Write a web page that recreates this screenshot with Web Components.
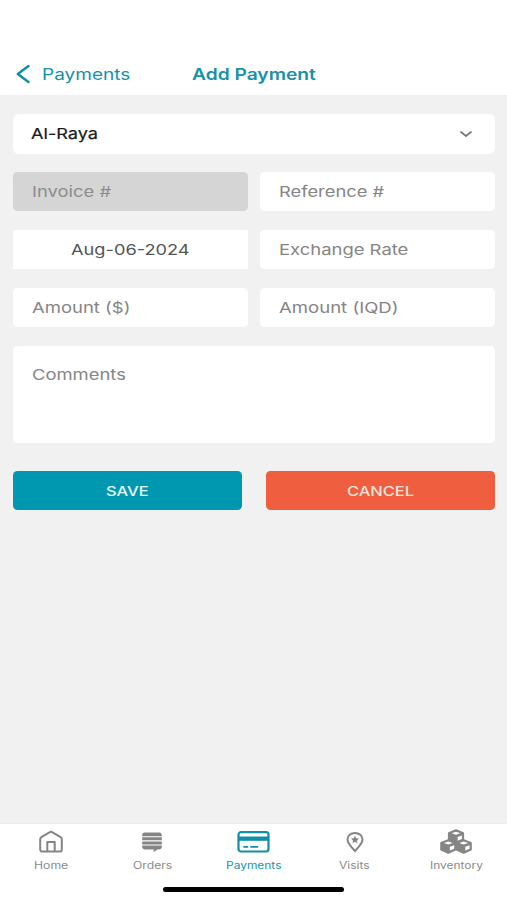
<!DOCTYPE html>
<html lang="en">
<head>
<meta charset="utf-8">
<title>Add Payment</title>
<style>
html, body { margin: 0; height: 100%; }
body { font-family: Inter, "Liberation Sans", sans-serif; background: #f1f1f1; overflow: hidden; }
</style>
</head>
<body>
<payment-app></payment-app>
<script>
const define = (name, html, setup) => {
  const template = document.createElement('template');
  template.innerHTML = html;
  customElements.define(name, class extends HTMLElement {
    connectedCallback() {
      if (this.shadowRoot) return;
      this.attachShadow({ mode: 'open' }).append(template.content.cloneNode(true));
      if (setup) setup(this, this.shadowRoot);
    }
  });
};

/* Wide-set label: text is stretched to the advance width given by "w". */
define('wide-text', `
<style>
:host { display: inline-block; white-space: nowrap; line-height: 20px; height: 20px; flex: none; }
span { display: inline-block; transform-origin: 0 50%; }
</style><span><slot></slot></span>`, (el, root) => {
  const w = +el.getAttribute('w');
  const span = root.querySelector('span');
  el.style.width = w + 'px';
  span.style.transform = 'scaleX(' + w / span.offsetWidth + ')';
});

define('nav-header', `
<style>
:host { display: flex; height: 95px; box-sizing: border-box; padding: 64px 0 0 16px; background: #fff; color: #1692a9; font-size: 16px; }
svg { display: block; width: 15px; height: 20px; margin-right: 10.500px; }
.title { font-weight: 600; margin-left: 62.500px; }
</style>
<svg viewBox="0 0 15 20" fill="none" stroke="#118fa8" stroke-width="2.500" stroke-linecap="round" stroke-linejoin="round"><path d="M12.500 2 1.800 10l10.700 8"/></svg>
<wide-text w="88"><slot name="back"></slot></wide-text>
<wide-text class="title" w="123.5"><slot name="title"></slot></wide-text>`);

define('form-field', `
<style>
:host { display: flex; align-items: center; box-sizing: border-box; height: 39px; padding: 1px 19px 0 19px; background: #fff; border-radius: 4.500px; color: #858585; font-size: 15px; }
:host([disabled]) { background: #d5d5d5; color: #8c8c8c; }
:host([date]) { justify-content: center; border-radius: 1px; color: #555; padding: 1px 0 0; }
:host([select]) { justify-content: space-between; border-radius: 6px; color: #1c1c1c; padding: 0 22px 0 18px; height: 40px; -webkit-text-stroke: .2px; }
:host([multiline]) { height: 97px; align-items: flex-start; padding-top: 19px; }
</style><slot></slot>`);

define('action-button', `
<style>
:host { display: flex; align-items: center; justify-content: center; height: 39px; border-radius: 4.500px; background: #0098b1; color: #e9fbfd; font-size: 13px; font-weight: 500; }
:host([danger]) { background: #ee5e3f; color: #ffe5dc; }
</style><slot></slot>`);

define('payment-form', `
<style>
:host { display: grid; grid-template-columns: 235.500px 235.500px; justify-content: space-between; row-gap: 19px; padding: 18.500px 12px 0 12.500px; }
.full { grid-column: 1 / -1; }
.first { margin-bottom: -.500px; }
.actions { display: grid; grid-template-columns: 229.500px 229.500px; justify-content: space-between; margin-top: 9px; }
svg { width: 14px; height: 10px; }
</style>
<form-field select class="full first"><wide-text w="66.5">Al-Raya</wide-text>
<svg viewBox="0 0 14 10" fill="none" stroke="#777" stroke-width="1.700" stroke-linecap="round" stroke-linejoin="round"><path d="m2 3 5 4 5-4"/></svg></form-field>
<form-field disabled><wide-text w="78.5">Invoice #</wide-text></form-field>
<form-field><wide-text w="105">Reference #</wide-text></form-field>
<form-field date><wide-text w="119">Aug-06-2024</wide-text></form-field>
<form-field><wide-text w="129">Exchange Rate</wide-text></form-field>
<form-field><wide-text w="98.5">Amount ($)</wide-text></form-field>
<form-field><wide-text w="120">Amount (IQD)</wide-text></form-field>
<form-field multiline class="full"><wide-text w="94.5">Comments</wide-text></form-field>
<div class="full actions">
<action-button><wide-text w="43">SAVE</wide-text></action-button>
<action-button danger><wide-text w="67">CANCEL</wide-text></action-button>
</div>`);

define('tab-item', `
<style>
:host { display: flex; flex-direction: column; align-items: center; color: #8b8b8b; font-size: 9.700px; }
:host([active]) { color: #1696ad; }
.icon { height: 26px; display: flex; align-items: center; }
</style><div class="icon"><slot name="icon"></slot></div><slot></slot>`);

define('tab-bar', `
<style>
:host { display: grid; grid-template-columns: repeat(5, 1fr); height: 62px; background: #fff; border-top: 1px solid #ececec; padding-top: 5px; box-sizing: border-box; }
svg { display: block; }
wide-text { margin-top: 1px; }
</style>
<tab-item><svg slot="icon" width="26" height="24" viewBox="0 0 26 24" fill="none" stroke="#858585" stroke-width="2" stroke-linejoin="round"><path d="M2.200 9.300c0-1 .4-1.700 1.200-2.200L11.500 2.300c1-.6 2-.6 3 0l8.100 4.800c.8.5 1.200 1.200 1.200 2.200V19.400c0 1.300-1 2.200-2.300 2.200H4.500c-1.300 0-2.300-.9-2.300-2.200zM9.300 21.600V12h7.400v9.600"/></svg><wide-text w="34">Home</wide-text></tab-item>
<tab-item><svg slot="icon" width="22" height="22" viewBox="0 0 22 22" fill="#858585"><path d="M1.200 5.200V3.900c0-1.400 1.100-2.400 2.500-2.400h14.600c1.400 0 2.500 1 2.500 2.400v1.300zM1.200 6.300h19.600v3H1.200zM1.200 10.400h19.600v3H1.200zM1.200 14.500h19.600v1.600c0 1.300-1 2.300-2.400 2.300h-2.100L12.700 21.300v-2.900h-9c-1.400 0-2.500-1-2.500-2.300z"/></svg><wide-text w="39">Orders</wide-text></tab-item>
<tab-item active><svg slot="icon" width="34" height="24" viewBox="0 0 34 24"><rect x="2.500" y="2.200" width="30" height="19.300" rx="2.500" fill="none" stroke="#118fa8" stroke-width="2.200"/><path d="M2.500 6.500h30v4.300h-30z" fill="#118fa8"/><path d="M8 16.800h3.500M15 16.800h6.500" stroke="#118fa8" stroke-width="1.800" stroke-linecap="round"/></svg><wide-text w="55.5">Payments</wide-text></tab-item>
<tab-item><svg slot="icon" width="20" height="22" viewBox="0 0 20 22"><path d="M10 20C7.500 17 2.500 12.700 2.500 8.500 2.500 4.600 5.800 2 10 2s7.500 2.600 7.500 6.500C17.500 12.700 12.500 17 10 20z" fill="none" stroke="#858585" stroke-width="2"/><path d="m10 4.700 1.200 2.500 2.900.3-2.100 1.900.5 2.800-2.500-1.400-2.500 1.400.5-2.800-2.100-1.900 2.900-.3z" fill="#858585"/></svg><wide-text w="31">Visits</wide-text></tab-item>
<tab-item><svg slot="icon" width="34" height="26" viewBox="0 0 34 26"><defs><g id="cube"><path d="M.8 3.800 8 1l7.200 2.800v6.900L8 13.900.8 10.700z" fill="#858585" stroke="#858585" stroke-width="1.800" stroke-linejoin="round"/><path d="M3.600 4.100 8 2.600l4.400 1.500L8 5.600z" fill="#fff"/><path d="M9.600 7.800 13.900 6.200v3.500l-4.300 1.900z" fill="#fff"/></g></defs><use href="#cube" x="9" y=".2"/><use href="#cube" x="1.300" y="10"/><use href="#cube" x="16.700" y="10"/></svg><wide-text w="53">Inventory</wide-text></tab-item>`);

define('home-indicator', `
<style>
:host { display: flex; justify-content: center; height: 15px; background: #fff; padding-top: 2px; box-sizing: border-box; }
i { width: 181px; height: 5px; border-radius: 3px; background: #000; }
</style><i></i>`);

define('payment-app', `
<style>
:host { display: flex; flex-direction: column; height: 900px; width: 507px; background: #f1f1f1; }
payment-form { flex: 1; align-content: start; }
</style>
<nav-header><span slot="back">Payments</span><span slot="title">Add Payment</span></nav-header>
<payment-form></payment-form>
<tab-bar></tab-bar>
<home-indicator></home-indicator>`);
</script>
</body>
</html>
